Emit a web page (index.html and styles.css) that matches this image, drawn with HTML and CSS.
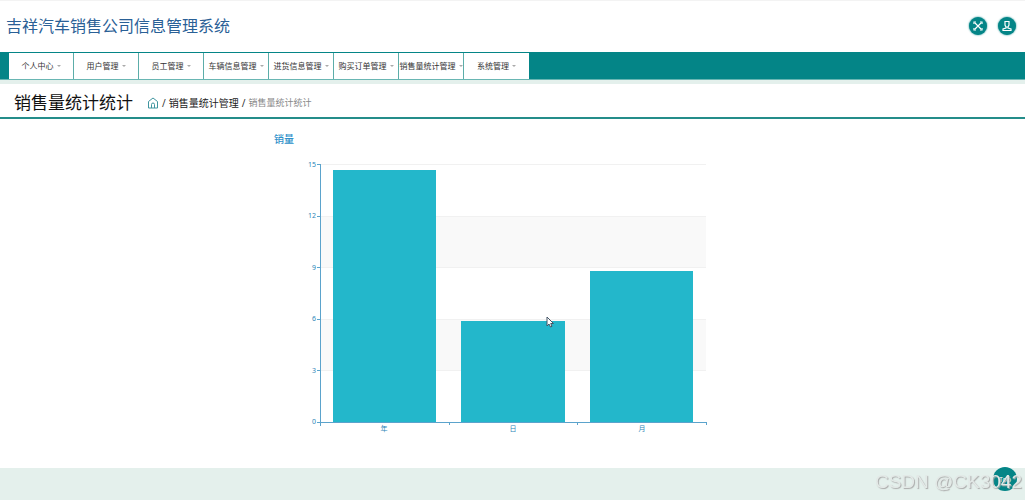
FILE: index.html
```html
<!DOCTYPE html>
<html lang="zh-CN">
<head>
<meta charset="utf-8">
<meta name="viewport" content="width=device-width, initial-scale=1">
<title>吉祥汽车销售公司信息管理系统</title>
<link rel="stylesheet" href="styles.css">
</head>
<body>
<header class="header">
  <h1 class="brand">吉祥汽车销售公司信息管理系统</h1>
  <div class="actions">
    <button class="round" type="button" aria-label="全屏">
      <svg viewBox="0 0 18 18" fill="none" stroke="currentColor" stroke-width="1.200"><path d="M6 6l6 6M12 6l-6 6"/><path d="M5 7V5h2M11 5h2v2M13 11v2h-2M7 13H5v-2"/></svg>
    </button>
    <button class="round" type="button" aria-label="用户">
      <svg viewBox="0 0 18 18" fill="none" stroke="currentColor" stroke-width="1.200"><path d="M7 4.500h4V8l-1 2H8L7 8zM8 10v1l-3 1v1.500h8V12l-3-1v-1"/></svg>
    </button>
  </div>
</header>
<nav class="nav">
  <button class="nav-item" type="button">个人中心<span class="caret"></span></button>
  <button class="nav-item" type="button">用户管理<span class="caret"></span></button>
  <button class="nav-item" type="button">员工管理<span class="caret"></span></button>
  <button class="nav-item" type="button">车辆信息管理<span class="caret"></span></button>
  <button class="nav-item" type="button">进货信息管理<span class="caret"></span></button>
  <button class="nav-item" type="button">购买订单管理<span class="caret"></span></button>
  <button class="nav-item" type="button">销售量统计管理<span class="caret"></span></button>
  <button class="nav-item" type="button">系统管理<span class="caret"></span></button>
</nav>
<div class="page-head">
  <h2 class="page-title">销售量统计统计</h2>
  <div class="crumbs">
    <a class="home" href="#" aria-label="首页"><svg viewBox="0 0 12 12" fill="none" stroke="currentColor"><path d="M1.500 4.500L6 1l4.500 3.500V11h-9zM4.500 11V7.500a1.500 1.500 0 0 1 3 0V11"/></svg></a>
    <span>/</span>
    <a class="crumb" href="#">销售量统计管理</a>
    <span>/</span>
    <span class="current">销售量统计统计</span>
  </div>
</div>
<main class="content">
  <svg class="chart" viewBox="0 0 513 349" role="img" aria-label="销量">
    <text class="chart-title" x="18" y="24">销量</text>
    <g class="band">
      <rect x="64" y="97" width="386" height="52"/>
      <rect x="64" y="200" width="386" height="52"/>
    </g>
    <path class="grid" d="M64 45.500h386M64 97.500h386M64 148.500h386M64 200.500h386M64 251.500h386"/>
    <g class="bar">
      <rect x="77" y="51" width="103" height="252"/>
      <rect x="205" y="202" width="104" height="101"/>
      <rect x="334" y="152" width="103" height="151"/>
    </g>
    <path class="axis" d="M64.500 45v262M61 45.500h3M61 97.500h3M61 148.500h3M61 200.500h3M61 251.500h3M61 303.500h389.500M193.500 303v3M321.500 303v3M450.500 303v3"/>
    <g class="value">
      <text x="60" y="48">15</text>
      <text x="60" y="99">12</text>
      <text x="60" y="151">9</text>
      <text x="60" y="202">6</text>
      <text x="60" y="254">3</text>
      <text x="60" y="305">0</text>
    </g>
    <g class="category">
      <text x="128" y="312">年</text>
      <text x="257" y="312">日</text>
      <text x="386" y="312">月</text>
    </g>
  </svg>
</main>
<footer class="footer"></footer>
<button class="float" type="button">Top</button>
<div class="watermark">CSDN @CK3042</div>
<svg class="pointer" viewBox="0 0 8 12" aria-hidden="true"><path d="M1 1v9l2-2 1.500 3 1.500-.7L4.700 7.500H7.500z"/></svg>
</body>
</html>
```
FILE: styles.css
```css
* {
  box-sizing: border-box;
}

body {
  display: flex;
  flex-direction: column;
  min-height: 100vh;
  margin: 0;
  background: #fff;
  color: #333;
  font-family: "Noto Sans", "Noto Sans CJK SC", sans-serif;
}

button {
  padding: 0;
  border: 0;
  font: inherit;
  cursor: pointer;
}

a {
  color: inherit;
  text-decoration: none;
}

h1,
h2 {
  margin: 0;
  font-weight: 400;
}

.header {
  display: flex;
  align-items: center;
  justify-content: space-between;
  height: 52px;
  padding: 0 9px 2px 6px;
  border-top: 1px solid #f3f3f3;
}

.brand {
  color: #2a6096;
  font-size: 16px;
  line-height: 24px;
}

.actions {
  display: flex;
  gap: 11px;
}

.round {
  width: 18px;
  height: 18px;
  border-radius: 50%;
  background: #048587;
  color: #fff;
  box-shadow: 0 0 2px #048587;
}

.round svg,
.home svg {
  display: block;
  width: 100%;
  height: 100%;
}

.nav {
  display: flex;
  height: 28px;
  padding: 0 9px;
  border-top: 1px solid #048587;
  border-bottom: 1px solid #69b6b3;
  background: #048587;
}

.nav-item {
  display: flex;
  align-items: center;
  justify-content: center;
  gap: 3px;
  width: 65px;
  padding-bottom: 1px;
  border-right: 1px solid #5cada9;
  background: #fff;
  color: #333;
  font-size: 8px;
  white-space: nowrap;
}

.nav-item:last-child {
  border-right: 0;
}

.caret {
  border: 2px solid transparent;
  border-top-color: #aaa;
  border-bottom: 0;
}

.page-head {
  display: flex;
  align-items: center;
  gap: 14px;
  height: 39px;
  padding: 4px 14px 0;
  border-top: 4px solid #e4f0ec;
  border-bottom: 2px solid #248d8a;
}

.page-title {
  color: #111;
  font-size: 17px;
  line-height: 24px;
}

.crumbs {
  display: flex;
  align-items: center;
  gap: 3px;
  font-size: 10px;
}

.home {
  width: 12px;
  height: 12px;
  color: #3f959f;
}

.crumb {
  color: #222;
}

.current {
  color: #888;
  font-size: 9px;
}

.content {
  flex: 1;
  display: flex;
  justify-content: center;
}

.chart {
  display: block;
  width: 513px;
  max-width: 100%;
}

.chart-title {
  fill: #2c8fc9;
  font-size: 10px;
  font-weight: 500;
}

.band {
  fill: #f9f9f9;
}

.grid {
  fill: none;
  stroke: #f1f1f1;
}

.bar {
  fill: #23b7cb;
}

.axis {
  fill: none;
  stroke: #5ba3cc;
}

.value,
.category {
  fill: #2c86b8;
  font-size: 7px;
}

.value {
  text-anchor: end;
}

.category {
  text-anchor: middle;
}

.footer {
  height: 32px;
  background: #e4f0ec;
}

.float {
  position: fixed;
  right: 8px;
  bottom: 9px;
  width: 24px;
  height: 24px;
  border-radius: 50%;
  background: #048587;
  color: #fff;
  font-size: 7px;
}

.watermark {
  position: fixed;
  right: 3px;
  bottom: 6px;
  color: #e3e9e7;
  font: 19px/24px "Liberation Sans", Arial, sans-serif;
  text-shadow: 1px 1px 1px #aaa;
  pointer-events: none;
}

.pointer {
  position: absolute;
  top: 316px;
  left: 546px;
  width: 8px;
  height: 12px;
  fill: #fff;
  stroke: #456;
  pointer-events: none;
}
```
